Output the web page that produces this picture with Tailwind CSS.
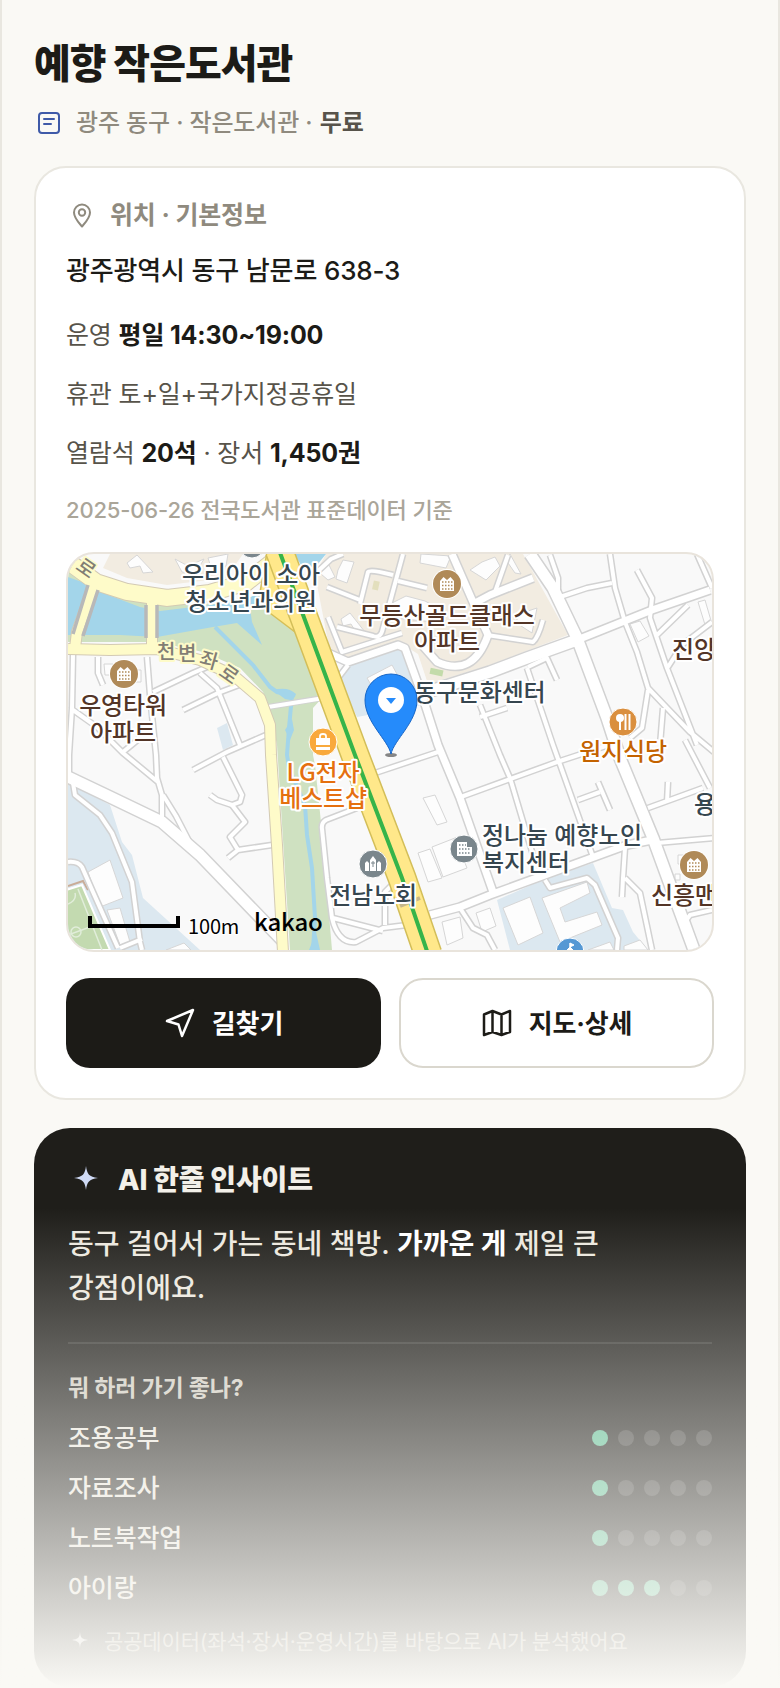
<!DOCTYPE html>
<html lang="ko">
<head>
    <meta charset="UTF-8">
    <meta name="viewport" content="width=device-width, initial-scale=1.0">
    <title>예향 작은도서관</title>
    <script src="https://cdn.jsdelivr.net/npm/@tailwindcss/browser@4"></script>
</head>
<body class="bg-[#faf9f5] text-[#1c1b17] tracking-[-0.01em] break-keep font-['Inter','Noto_Sans_CJK_KR',sans-serif]">
    <main class="relative min-h-screen border-x-2 border-[#e9e7e0] px-8 pt-9">
        <!-- Title -->
        <h1 class="text-[40px] leading-[56px] font-extrabold tracking-tight">예향 작은도서관</h1>
        <div class="mt-[14px] flex items-center gap-3 text-[24px] leading-[34px] text-[#8f8a7e]">
            <svg class="size-[30px] shrink-0" viewBox="0 0 30 30" fill="none" stroke="#3f5aa8" stroke-width="2" stroke-linecap="round">
                <rect x="5" y="5" width="20" height="20" rx="3"/>
                <path d="M10 11h10M10 16h7"/>
            </svg>
            <p class="font-medium">광주 동구 · 작은도서관 · <span class="ml-px font-bold text-[#57534a]">무료</span></p>
        </div>

        <!-- Location card -->
        <section class="mt-[26px] rounded-[32px] border-2 border-[#e9e7e0] bg-white p-[30px]">
            <h2 class="flex items-center gap-3 text-[25px] leading-[34px] font-bold text-[#8f8a7e]">
                <svg class="size-8 shrink-0" viewBox="0 0 32 32" fill="none" stroke="currentColor" stroke-width="2" stroke-linejoin="round">
                    <path d="M16 27.500C13 24 8 19 8 13.500a8 8 0 0 1 16 0C24 19 19 24 16 27.500z"/>
                    <circle cx="16" cy="13.500" r="3.200"/>
                </svg>
                위치 · 기본정보
            </h2>
            <p class="mt-[18px] text-[26px] leading-[42px] font-medium">광주광역시 동구 남문로 638-3</p>
            <div class="mt-6 flex flex-col gap-5 text-[25px] leading-[39px] text-[#57534a]">
                <p>운영 <b class="font-bold text-[#1c1b17]">평일 14:30~19:00</b></p>
                <p>휴관 토+일+국가지정공휴일</p>
                <p>열람석 <b class="font-bold text-[#1c1b17]">20석</b> · 장서 <b class="font-bold text-[#1c1b17]">1,450권</b></p>
            </div>
            <p class="mt-5 text-[22px] leading-[34px] font-medium text-[#aaa599]">2025-06-26 전국도서관 표준데이터 기준</p>

            <!-- Map -->
            <div class="mt-[25px] h-[400px] overflow-hidden rounded-[28px] border-2 border-[#e9e4dc] bg-[#f9f9f9]">
                <svg class="size-full" viewBox="0 0 644 396" preserveAspectRatio="xMidYMid slice" role="img" aria-label="예향 작은도서관 지도">
                    <defs>
                        <g id="lanes" fill="none" stroke-linejoin="round">
                            <path d="M30 103V119L35 131M79 103L82 141L88 201L89 224L94 241V263M5 101L4 154L1 201V223M5 156L29 173L55 199L90 228M55 198L72 184"/>
                            <path d="M85 138L125 119L139 113M132 119L149 134L172 191M115 156L150 139L179 128M198 181L159 198L125 216M155 203L174 241L172 248L164 251L149 246L142 241"/>
                            <path d="M164 251L177 268L162 283L170 296L160 304M170 296L204 291M95 241L108 262L122 289"/>
                            <path d="M5 229L7 241L32 261L44 279L64 328L72 388L74 396M0 308Q10 307 14 313L25 338L50 394M52 394L74 385"/>
                            <path d="M335 0L322 48L315 74Q313 85 305 82L269 73M259 33L292 46M292 50L300 18Q302 15 325 21M330 27L359 34M260 63L274 98L334 79M280 111L270 124M247 20L263 5L275 0"/>
                            <path d="M419 81L465 88Q470 84 475 66M440 1L427 38M482 1L490 24V41M492 43L519 34L544 29"/>
                            <path d="M542 0L547 34L557 68L569 98L580 134L599 154L622 178L646 198M580 136L574 174L562 184M569 16L584 44L582 64L599 114L629 191M587 83L620 51M600 113L614 91L644 68M595 154L592 191M629 0L644 34"/>
                            <path d="M460 113L479 104L489 126M459 114L485 191L525 303M412 151L432 201L442 224L465 301M412 163L439 154M307 219L370 198M390 244L489 208L550 188"/>
                            <path d="M510 246L532 238M530 228L542 256M580 254L635 234M599 248L600 228M617 186L642 234M589 289L646 284"/>
                            <path d="M557 294L555 324L554 343M557 324L572 339L584 396M477 326L482 334L519 324L527 331L550 384L549 396M617 368L622 361L644 356"/>
                            <path d="M289 254L258 266Q253 269 254 275L259 324L264 364Q270 390 288 388L315 374L339 371M265 364L315 377M317 371V338L324 331M392 354L405 374L419 381L427 396"/>
                        </g>
                        <g id="streets" fill="none" stroke-linejoin="round">
                            <path d="M260 99L280 108L330 91L337 94L354 141L370 191L392 244L425 338M354 91L369 108Q405 124 420 81L405 48L384 0M405 50L422 41L465 24M642 36L584 56L509 86M362 361L392 353L422 341L559 291L584 286"/>
                        </g>
                        <g id="avenues" fill="none" stroke-linejoin="round">
                            <path d="M0 223L42 243L94 268L132 301L214 386M359 138L422 118L459 104L509 86M462 0L485 34L509 84L539 164L552 204L585 284L626 396"/>
                        </g>
                        <g id="yellow" fill="none" stroke-linejoin="round">
                            <path d="M27 28L9 78L7 94M84 44V91"/>
                            <path d="M0 95L42 96L89 95L132 106L165 121L192 144L202 171L203 201L209 291L215 398"/>
                        </g>
                        <g id="apartment">
                            <circle r="15" fill="#fff"/>
                            <circle r="14" fill="#b08a58"/>
                            <path d="M-7 7V-3L-3.500 -7L0 -4L3.500 -7L7 -3V7z" fill="#fff"/>
                            <path d="M-5 -2H5.500M-5 1.500H5.500M-5 5H5.500" stroke="#b08a58" stroke-width="1.500" stroke-dasharray="1.500 1.500"/>
                        </g>
                    </defs>

                    <!-- Land -->
                    <path fill="#f2ece1" d="M42 0L35 14L59 24L99 31L158 24L175 0zM258 0L247 20L262 98L282 106L331 88L350 100L360 130L422 111L500 81L455 0z"/>
                    <path fill="#cfe1c1" d="M0 10L30 33L80 50L130 51L200 40L227 78L254 144L245 154V201L247 211L254 278L264 396H222L209 191L202 154L195 138L172 114L135 98L89 88H0z"/>
                    <path fill="#dce8f0" d="M280 111L332 94L355 151L289 163L270 124zM0 228L42 251L54 288L64 301L75 344L132 396H0zM429 346L479 324L525 309L544 354L555 356L565 378L580 396H442zM149 174L159 169L165 191L155 196z"/>
                    <path fill="#c3dab0" stroke="#fff" stroke-width="2" d="M-2 336L14 331L42 396H-2z"/>
                    <path fill="none" stroke="#c9ad98" stroke-width="2" d="M0 332L15 327L20 336"/>
                    <g fill="none" stroke="#e1edda" stroke-width="1.500">
                        <circle cx="8" cy="378" r="5"/>
                        <path d="M0 381L22 373M10 335L34 396M0 350Q9 346 7 339"/>
                    </g>
                    <rect x="362" y="115" width="13" height="6" fill="#c3dbaa" transform="rotate(12 368 118)"/>
                    <rect x="305" y="27" width="6" height="9" fill="#e3dfbd" transform="rotate(12 308 31)"/>

                    <!-- Water -->
                    <path fill="#a3d5ea" d="M0 23L22 31L35 39L72 53L92 57L142 51L182 44L212 20V44L182 54L184 68L194 91L169 69L145 73L89 83L52 81H0zM226 0H258L245 16L235 14z"/>
                    <path fill="none" stroke="#a3d5ea" stroke-width="4" d="M147 73L165 91L185 111L202 133L209 138L224 141L221 174L219 201L221 214L237 251L239 281L244 314L247 364L245 396"/>
                    <path fill="#a3d5ea" d="M205 136Q220 132 228 140Q226 148 217 145zM224 165L217 176L222 186L226 176zM241 396L248 378L252 396z"/>

                    <!-- Buildings -->
                    <g fill="#fdfdfd" stroke="#d6d6d6">
                        <path d="M59 9L69 1L85 18L75 19L72 12L62 14zM107 5L120 12L136 5L127 20L114 18zM140 4L160 0L158 12L144 16zM247 21L260 9L267 23L260 26L253 20zM270 16L275 6L286 8L279 29L268 25zM273 65L282 59L297 78L289 80L283 70L275 72z"/>
                        <path d="M353 0L383 2L378 14L352 9zM402 16L414 8L427 3L432 12L418 26zM322 50L338 42L357 47L370 54L366 68L326 64zM442 0L453 20L447 19L438 6zM448 61L469 54L464 79L450 70z"/>
                        <path d="M299 124L324 111L330 122L305 134zM355 244L367 241L379 268L369 271zM350 299L362 295L374 324L360 328zM364 293L387 284L399 314L375 323zM374 368L392 363L395 384L379 391zM408 359L422 354L428 372L414 378z"/>
                        <path d="M435 354L462 343L475 379L450 391zM474 344L519 328L522 339L492 354L497 368L529 358L534 371L492 388zM520 396L542 388L546 396zM556 392L572 386L580 396H556z"/>
                        <path d="M20 318L42 306L55 344L32 353zM39 356L52 354L62 388L52 391zM98 396L116 389L123 396zM630 48L637 46L644 70L638 74zM562 70L572 67L581 82L570 88zM607 320h5v6h-5zM610 301h6v9h-6z"/>
                        <path d="M36 110H45V121H37zM68 116H73V128H68z"/>
                    </g>

                    <!-- Roads -->
                    <use href="#lanes" stroke="#d2d2d2" stroke-width="7"/>
                    <use href="#streets" stroke="#d2d2d2" stroke-width="10"/>
                    <use href="#avenues" stroke="#d2d2d2" stroke-width="14"/>
                    <use href="#lanes" stroke="#fff" stroke-width="4"/>
                    <use href="#streets" stroke="#fff" stroke-width="7"/>
                    <use href="#avenues" stroke="#fff" stroke-width="11"/>
                    <path d="M254 144L200 153" stroke="#d2d2d2" stroke-width="6"/>
                    <path d="M256 144L200 153" stroke="#fff" stroke-width="4"/>
                    <use href="#yellow" stroke="#d3cab4" stroke-width="12"/>
                    <path d="M0 7L28 28L59 38L99 44L142 39L179 28L208 5" fill="none" stroke="#d3cab4" stroke-width="18"/>
                    <path d="M-2 6L28 28L59 38L99 44L142 39L179 28L208 5" fill="none" stroke="#fefbc9" stroke-width="16"/>
                    <use href="#yellow" stroke="#fefbc9" stroke-width="10"/>
                    <path d="M20 31L5 80M30 36L15 82M78 51V84M89 51V84" stroke="#b8b8b8" stroke-width="3.500"/>
                    <path d="M199 -2L190 50L227 78L240 76L214 -2z" fill="#ffe88a" stroke="#d6bf58" stroke-width="1.500"/>
                    <path d="M211 -4L287 201L334 324L360 400" fill="none" stroke="#d3be59" stroke-width="29"/>
                    <path d="M211 -4L287 201L334 324L360 400" fill="none" stroke="#ffe88a" stroke-width="26"/>
                    <path d="M211 -4L287 201L334 324L360 400" fill="none" stroke="#36b44a" stroke-width="4"/>
                    <path d="M332 352L352 344" stroke="#c5b78b" stroke-width="4"/>

                    <!-- Road names -->
                    <g class="font-['Noto_Sans_CJK_KR',sans-serif] text-[20px] font-medium" fill="#827e75" stroke="#fefbc9" stroke-width="4" paint-order="stroke" stroke-linejoin="round" text-anchor="middle">
                        <text x="98" y="105">천</text>
                        <text x="119" y="107">변</text>
                        <text transform="translate(139 113) rotate(16)">좌</text>
                        <text transform="translate(157 126) rotate(35)">로</text>
                        <text transform="translate(14 20) rotate(35)">로</text>
                        <text transform="translate(-4 7) rotate(35)">좌</text>
                    </g>

                    <!-- Places -->
                    <use href="#apartment" x="56" y="120"/>
                    <use href="#apartment" x="379" y="30"/>
                    <use href="#apartment" x="626" y="311"/>
                    <circle cx="184" cy="-9" r="13" fill="#7a868c" stroke="#fff"/>
                    <circle cx="255" cy="188" r="14" fill="#f9a93c" stroke="#fff"/>
                    <path d="M248 184h14v7h-14zM248 193h14v3h-14z" fill="#fff"/>
                    <path d="M252 184v-2q0 -2 3 -2t3 2v2" fill="none" stroke="#fff" stroke-width="1.800"/>
                    <circle cx="555" cy="168" r="14" fill="#da8f3e" stroke="#fff"/>
                    <circle cx="552" cy="164" r="4" fill="#fff"/>
                    <path d="M552 166v10M557.500 160v16M561.500 160v16" stroke="#fff" stroke-width="2"/>
                    <circle cx="305" cy="310" r="14" fill="#7a868c" stroke="#fff"/>
                    <path d="M302 317v-11l3 -4l3 4v11zM297 317v-8l2 -2l2 2v8zM309 317v-8l2 -2l2 2v8z" fill="#fff"/>
                    <path d="M305 307v6M303 309h4" stroke="#7a868c" stroke-width="1"/>
                    <circle cx="396" cy="295" r="14" fill="#7a868c" stroke="#fff"/>
                    <path d="M389 288h10v5h5v9h-15z" fill="#fff"/>
                    <path d="M391 291h7M391 295h11M391 299h11" stroke="#7a868c" stroke-width="1.500" stroke-dasharray="1.500 1.500"/>
                    <circle cx="502" cy="398" r="14" fill="#5598d4" stroke="#fff"/>
                    <path d="M502 398v-9M502 389l4 2l-4 2zM498 397l4 -4l4 4z" fill="#fff" stroke="#fff"/>

                    <g class="font-['Noto_Sans_CJK_KR',sans-serif] text-[24px] font-medium" stroke="#fff" stroke-width="4" paint-order="stroke" stroke-linejoin="round">
                        <g fill="#36464f">
                            <text text-anchor="middle"><tspan x="183" y="29">우리아이 소아</tspan><tspan x="183" y="56">청소년과의원</tspan></text>
                            <text x="346" y="147">동구문화센터</text>
                            <text><tspan x="414" y="290">정나눔 예향노인</tspan><tspan x="414" y="317">복지센터</tspan></text>
                            <text x="305" y="350" text-anchor="middle">전남노회</text>
                            <text x="626" y="259">용</text>
                        </g>
                        <g fill="#533527">
                            <text text-anchor="middle"><tspan x="55" y="160">우영타워</tspan><tspan x="55" y="187">아파트</tspan></text>
                            <text text-anchor="middle"><tspan x="379" y="70">무등산골드클래스</tspan><tspan x="379" y="96">아파트</tspan></text>
                            <text x="604" y="104">진양</text>
                            <text x="583" y="350">신흥맨션</text>
                        </g>
                        <text fill="#e5700f" text-anchor="middle"><tspan x="255" y="227">LG전자</tspan><tspan x="255" y="253">베스트샵</tspan></text>
                        <text x="555" y="206" fill="#c46300" text-anchor="middle">원지식당</text>
                    </g>

                    <!-- Marker -->
                    <ellipse cx="323" cy="201" rx="6" ry="2" fill="#555" fill-opacity=".7"/>
                    <path d="M323 200C320 186 297 168 297 146a26 26 0 0 1 52 0C349 168 326 186 323 200z" fill="#258bfb" stroke="#1666c8"/>
                    <circle cx="323" cy="146" r="13" fill="#fff"/>
                    <path d="M318 144h10l-5 6z" fill="#258bfb"/>

                    <!-- Scale and logo -->
                    <path d="M22 362V372H110V362" fill="none" stroke="#000" stroke-width="4"/>
                    <text class="font-['Noto_Sans_CJK_KR',sans-serif] text-[20px]" x="120" y="380" stroke="#fff" stroke-width="2" paint-order="stroke">100m</text>
                    <text class="font-['Noto_Sans_CJK_KR',sans-serif] text-[24px] font-medium" x="186" y="377">kakao</text>
                </svg>
            </div>

            <div class="mt-[26px] grid grid-cols-2 gap-[18px] text-[26px] font-bold">
                <button type="button" class="flex h-[90px] items-center justify-center gap-4 rounded-3xl bg-[#1c1b17] text-white">
                    <svg class="size-8" viewBox="0 0 32 32" fill="none" stroke="currentColor" stroke-width="2.500" stroke-linejoin="round">
                        <path d="M29 3L18 29L14.500 17.500L3 14z"/>
                    </svg>
                    길찾기
                </button>
                <button type="button" class="flex h-[90px] items-center justify-center gap-4 rounded-3xl border-2 border-[#dad7ce] bg-white">
                    <svg class="size-8" viewBox="0 0 32 32" fill="none" stroke="currentColor" stroke-width="2.500" stroke-linejoin="round">
                        <path d="M3 7.500L11.500 4L20.500 7.500L29 4V25L20.500 28L11.500 25L3 28zM11.500 4V25M20.500 7.500V28"/>
                    </svg>
                    지도·상세
                </button>
            </div>
        </section>

        <!-- AI insight card -->
        <section class="mt-7 rounded-[36px] bg-[#1f1e1a] px-[34px] pt-[31px] pb-7 text-[#ece8df]">
            <h2 class="flex items-center gap-[14px] text-[28px] leading-[42px] font-extrabold text-[#f3f0e9]">
                <svg class="size-9" viewBox="0 0 36 36" fill="#cfdaf5">
                    <path d="M18 4C19 12 21 15 30 16C21 17 19 20 18 28C17 20 15 17 6 16C15 15 17 12 18 4z"/>
                </svg>
                AI 한줄 인사이트
            </h2>
            <p class="mt-[21px] text-[28px] leading-[44px] font-medium tracking-normal">동구 걸어서 가는 동네 책방. <b class="font-bold text-white">가까운 게</b> 제일 큰 강점이에요.</p>
            <hr class="mt-8 border-t-2 border-white/10">
            <h3 class="mt-[26px] text-[23px] leading-[36px] font-bold text-[#cfcbc0]">뭐 하러 가기 좋나?</h3>
            <ul class="mt-[7px] text-[25px] leading-[50px] font-medium">
                <li class="flex items-center justify-between">조용공부
                    <span class="flex gap-[10px]" role="img" aria-label="5점 중 1점">
                        <i class="size-4 rounded-full bg-[#5bbd92]"></i><i class="size-4 rounded-full bg-white/15"></i><i class="size-4 rounded-full bg-white/15"></i><i class="size-4 rounded-full bg-white/15"></i><i class="size-4 rounded-full bg-white/15"></i>
                    </span>
                </li>
                <li class="flex items-center justify-between">자료조사
                    <span class="flex gap-[10px]" role="img" aria-label="5점 중 1점">
                        <i class="size-4 rounded-full bg-[#5bbd92]"></i><i class="size-4 rounded-full bg-white/15"></i><i class="size-4 rounded-full bg-white/15"></i><i class="size-4 rounded-full bg-white/15"></i><i class="size-4 rounded-full bg-white/15"></i>
                    </span>
                </li>
                <li class="flex items-center justify-between">노트북작업
                    <span class="flex gap-[10px]" role="img" aria-label="5점 중 1점">
                        <i class="size-4 rounded-full bg-[#5bbd92]"></i><i class="size-4 rounded-full bg-white/15"></i><i class="size-4 rounded-full bg-white/15"></i><i class="size-4 rounded-full bg-white/15"></i><i class="size-4 rounded-full bg-white/15"></i>
                    </span>
                </li>
                <li class="flex items-center justify-between">아이랑
                    <span class="flex gap-[10px]" role="img" aria-label="5점 중 3점">
                        <i class="size-4 rounded-full bg-[#5bbd92]"></i><i class="size-4 rounded-full bg-[#5bbd92]"></i><i class="size-4 rounded-full bg-[#5bbd92]"></i><i class="size-4 rounded-full bg-white/15"></i><i class="size-4 rounded-full bg-white/15"></i>
                    </span>
                </li>
            </ul>
            <p class="mt-3 flex items-center gap-3 text-[21px] leading-[34px] text-[#b4b0a6]">
                <svg class="size-6" viewBox="0 0 24 24" fill="#dcdce2">
                    <path d="M12 2C12.500 8 14 9 20 10C14 11 12.500 12 12 18C11.500 12 10 11 4 10C10 9 11.500 8 12 2z"/>
                </svg>
                공공데이터(좌석·장서·운영시간)를 바탕으로 AI가 분석했어요
            </p>
        </section>

        <!-- Fade at the end of the preview -->
        <div class="pointer-events-none absolute -inset-x-[2px] bottom-0 h-[480px] bg-linear-to-b from-[#faf9f5]/0 to-[#faf9f5]"></div>
    </main>
</body>
</html>
